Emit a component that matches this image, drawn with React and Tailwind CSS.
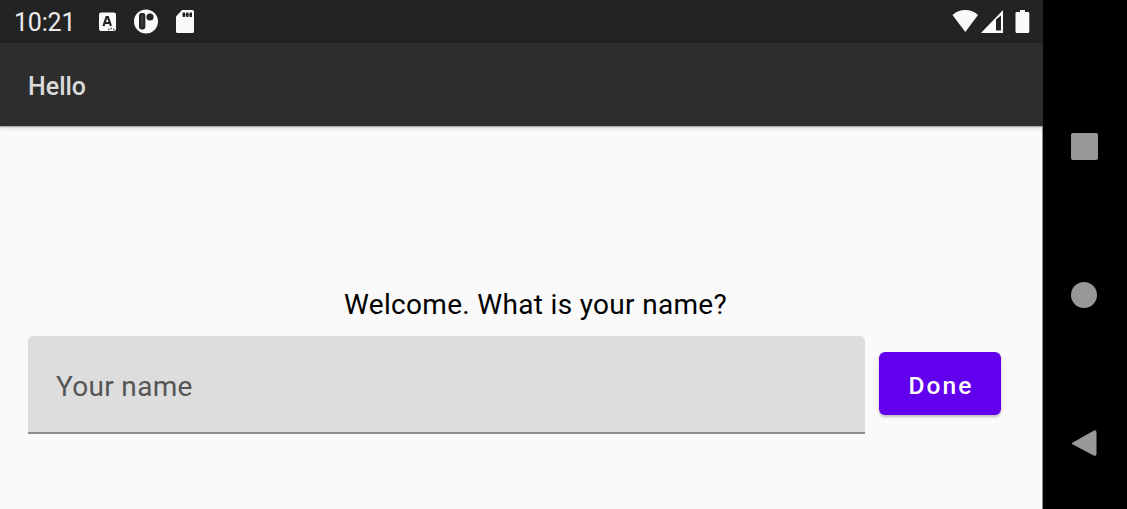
function StatusBar() {
  return (
    <div className="flex h-[43px] shrink-0 items-center bg-[#232323] pl-[14px] pr-[13px] text-[#fafafa]">
      <span className="w-[84px] pt-[2px] text-[25px] leading-[43px] tracking-[-0.2px] text-[#ececec]">10:21</span>
      <svg className="mr-[17px] h-[43px] w-[19px]" viewBox="0 0 19 43">
        <rect x="1" y="12.5" width="17" height="18.5" rx="2" fill="#fafafa" />
        <path d="M5.500 26 8.500 17h1.400L12.900 26M6.500 23h5.500" fill="none" stroke="#232323" strokeWidth="2.200" />
        <path d="M10 29.500h1.500m1-1h1.500m1 1h1.500" stroke="#555555" strokeWidth="1.400" />
      </svg>
      <svg className="mr-[17px] h-[43px] w-[25px]" viewBox="0 0 25 43">
        <circle cx="12" cy="21.500" r="12" fill="#fafafa" />
        <rect x="5" y="13" width="6.300" height="16.500" rx="2.400" fill="#232323" />
        <rect x="7" y="15" width="2.200" height="12.500" rx="1" fill="#3c3c3c" />
        <circle cx="16" cy="17" r="3.600" fill="#232323" />
      </svg>
      <svg className="mr-px h-[43px] w-[18px]" viewBox="0 0 18 43">
        <path d="M6 10h10.500q1.500 0 1.500 1.500v20q0 1.500-1.500 1.500H1.500q-1.500 0-1.500-1.500V16.500Z" fill="#fafafa" />
        <path d="M7.800 12.500v4.500m3.500-4.500v4.500m3.500-4.500v4.500" stroke="#232323" strokeWidth="2.400" />
        <path d="M6.600 14.800h9.400" stroke="#232323" strokeWidth="1" />
      </svg>
      <div className="flex-1" />
      <svg className="h-[43px] w-[27px]" viewBox="0 0 27 43">
        <path d="M.5 15Q6 10 13.300 10T26 15L13.300 32Z" fill="#fafafa" />
      </svg>
      <svg className="mr-[11px] h-[43px] w-[25px]" viewBox="0 0 25 43">
        <path fillRule="evenodd" d="M2 33 24 10V33ZM17 19.500V30.500H22V15.500Z" fill="#fafafa" />
      </svg>
      <svg className="h-[43px] w-[15px]" viewBox="0 0 15 43">
        <path d="M5 10h5v2h3q1.300 0 1.300 1.300v18.200q0 1.500-1.500 1.500H2q-1.500 0-1.500-1.500V13.300Q.5 12 1.800 12H5Z" fill="#fafafa" />
      </svg>
    </div>
  );
}

function NavigationBar() {
  return (
    <nav className="flex w-[84px] shrink-0 flex-col items-center bg-black pt-[133px]">
      <button aria-label="Recents" className="mr-px block size-[27px] rounded-[2px] bg-[#989898]" />
      <button aria-label="Home" className="mr-[2px] mt-[122px] block size-[26px] rounded-full bg-[#989898]" />
      <button aria-label="Back" className="mr-[2px] mt-[120px] block">
        <svg className="block h-[30px] w-[28px]" viewBox="0 0 28 30">
          <path d="M2 15.500 24 3q2-.8 2 1v22q0 2-2 1.200Z" fill="#989898" stroke="#989898" strokeLinejoin="round" />
        </svg>
      </button>
    </nav>
  );
}

export default function App() {
  return (
    <div className="flex h-[509px] w-[1127px] overflow-hidden bg-black font-[Roboto,sans-serif]">
      <div className="flex min-w-0 flex-1 flex-col bg-[#fafafa]">
        <StatusBar />
        <header className="flex h-[83px] shrink-0 items-center bg-[#2d2d2d] pl-[28px] pt-[4px] text-[25px] font-medium text-[#dadada] shadow-[0_1px_1px_#aaaaaa,0_2px_5px_#00000026]">
          Hello
        </header>
        <main className="flex flex-1 flex-col border-r border-[#8c8a90] pl-[28px] pt-[158px]">
          <p className="ml-[316px] h-[52px] whitespace-nowrap text-[28px] leading-[42px] tracking-[0.32px] text-black">
            Welcome. What is your name?
          </p>
          <div className="flex items-center gap-[14px]">
            <input
              aria-label="Your name"
              placeholder="Your name"
              className="h-[98px] w-[837px] rounded-t-[5px] border-b-2 border-[#8f8c92] bg-[#dddddd] pl-[28px] pt-[4px] text-[28px] tracking-[0.32px] outline-none placeholder:text-[#555555]"
            />
            <button className="mb-[3px] h-[63px] w-[122px] rounded-[6px] bg-[#6200ee] pl-[2px] pt-[6px] text-[24.5px] font-medium tracking-[2.1px] text-white shadow-[0_2px_3px_#00000040]">
              Done
            </button>
          </div>
        </main>
      </div>
      <NavigationBar />
    </div>
  );
}
